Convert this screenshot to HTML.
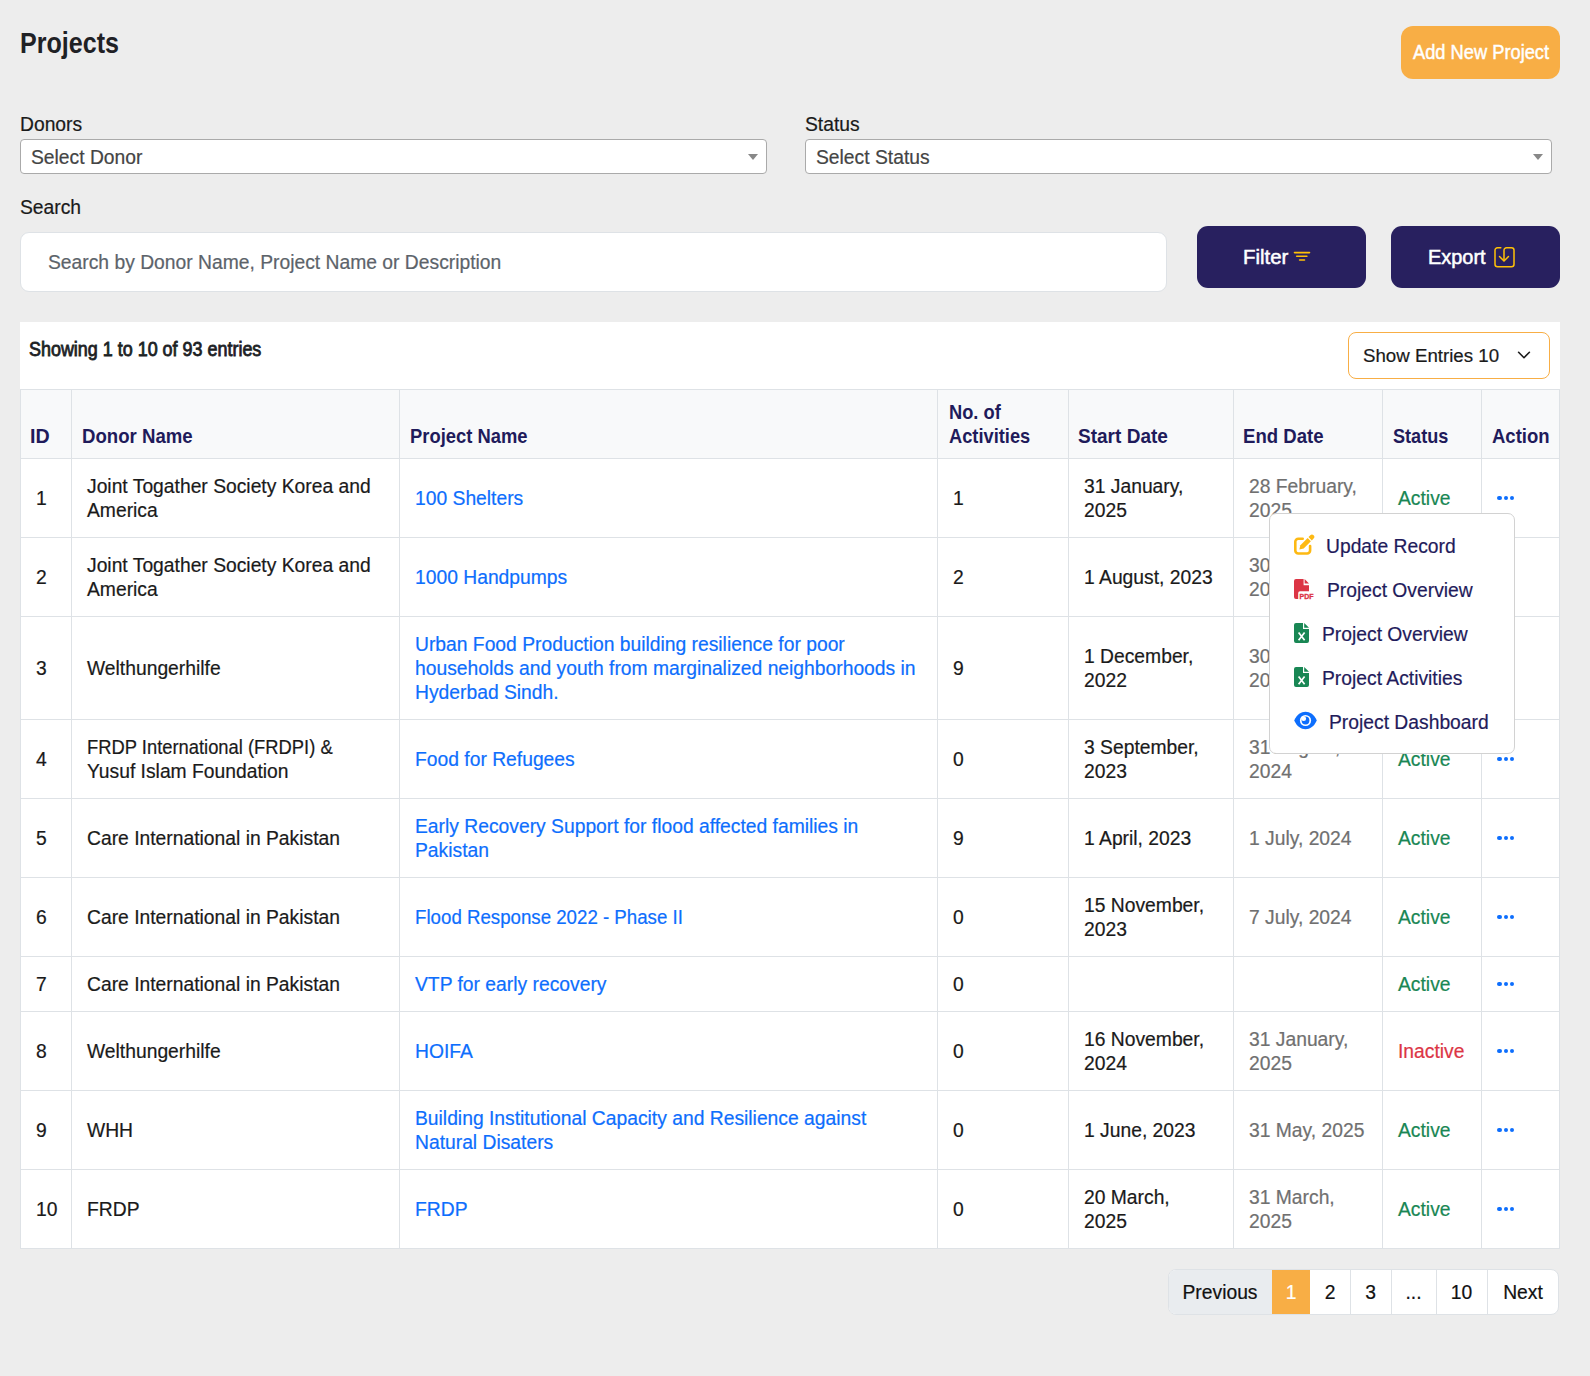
<!DOCTYPE html>
<html><head><meta charset="utf-8"><title>Projects</title>
<style>
*{margin:0;padding:0;box-sizing:border-box}
html,body{width:1590px;height:1376px;overflow:hidden;background:#ededed;font-family:"Liberation Sans", sans-serif;}
.t{position:absolute;white-space:nowrap;-webkit-text-stroke:0.2px currentColor;}
.b{position:absolute;}
</style></head><body>

<div class="t" style="left:19.61px;top:26.55px;font-size:29px;color:#1f2125;font-weight:bold;letter-spacing:0px;line-height:32px;transform-origin:0 0;transform:scaleX(0.8644);-webkit-text-stroke:0;">Projects</div>
<div class="b" style="left:1401px;top:26px;width:159px;height:53px;background:#f8ae45;border-radius:12px;"></div>
<div class="t" style="left:1412.55px;top:39.64px;font-size:19.5px;color:#fff;font-weight:normal;letter-spacing:0px;line-height:24px;transform-origin:0 0;transform:scaleX(0.9370);-webkit-text-stroke:0.45px #fff;">Add New Project</div>
<div class="t" style="left:20px;top:113.11255px;font-size:19.3px;color:#1a1a1a;font-weight:normal;letter-spacing:0px;line-height:24px;">Donors</div>
<div class="t" style="left:805px;top:113.11255px;font-size:19.3px;color:#1a1a1a;font-weight:normal;letter-spacing:0px;line-height:24px;">Status</div>
<div class="b" style="left:20px;top:139px;width:747px;height:35px;background:#fff;border:1px solid #aaa;border-radius:4px;"></div>
<div class="t" style="left:31px;top:145.71255000000002px;font-size:19.3px;color:#444;font-weight:normal;letter-spacing:0px;line-height:24px;">Select Donor</div>
<div class="b" style="left:748px;top:154px;width:0;height:0;border-left:5px solid transparent;border-right:5px solid transparent;border-top:6px solid #888;"></div>
<div class="b" style="left:805px;top:139px;width:747px;height:35px;background:#fff;border:1px solid #aaa;border-radius:4px;"></div>
<div class="t" style="left:816px;top:145.71255000000002px;font-size:19.3px;color:#444;font-weight:normal;letter-spacing:0px;line-height:24px;">Select Status</div>
<div class="b" style="left:1533px;top:154px;width:0;height:0;border-left:5px solid transparent;border-right:5px solid transparent;border-top:6px solid #888;"></div>
<div class="t" style="left:20px;top:195.81255px;font-size:19.3px;color:#1a1a1a;font-weight:normal;letter-spacing:0px;line-height:24px;">Search</div>
<div class="b" style="left:20px;top:232px;width:1147px;height:60px;background:#fff;border:1px solid #dee2e6;border-radius:9px;"></div>
<div class="t" style="left:48px;top:250.91255px;font-size:19.3px;color:#5c636a;font-weight:normal;letter-spacing:0px;line-height:24px;">Search by Donor Name, Project Name or Description</div>
<div class="b" style="left:1197px;top:226px;width:169px;height:62px;background:#28205f;border-radius:11px;"></div>
<div class="t" style="left:1242.72px;top:245.04px;font-size:19.5px;color:#fff;font-weight:normal;letter-spacing:0px;line-height:24px;transform-origin:0 0;transform:scaleX(1.0449);-webkit-text-stroke:0.5px #fff;">Filter</div>
<svg class="b" style="left:1292px;top:249px" width="20" height="14" viewBox="0 0 20 14">
<g stroke="#ffc107" stroke-width="1.6" stroke-linecap="round">
<line x1="2.5" y1="3.6" x2="17.5" y2="3.6"/><line x1="4.7" y1="7.3" x2="14.9" y2="7.3"/><line x1="7.6" y1="11" x2="12.5" y2="11"/></g></svg>
<div class="b" style="left:1391px;top:226px;width:169px;height:62px;background:#28205f;border-radius:11px;"></div>
<div class="t" style="left:1427.96px;top:245.04px;font-size:19.5px;color:#fff;font-weight:normal;letter-spacing:0px;line-height:24px;transform-origin:0 0;transform:scaleX(1.0220);-webkit-text-stroke:0.5px #fff;">Export</div>
<svg class="b" style="left:1492px;top:245px" width="24" height="24" viewBox="0 0 24 24">
<g fill="none" stroke="#ffc107" stroke-width="1.5" stroke-linecap="round" stroke-linejoin="round">
<path d="M8.8 2.7 H5.5 a2.5 2.5 0 0 0 -2.5 2.5 V19.2 a2.5 2.5 0 0 0 2.5 2.5 H19.5 a2.5 2.5 0 0 0 2.5 -2.5 V5.2 a2.5 2.5 0 0 0 -2.5 -2.5 H14.5 a2.5 2.5 0 0 0 -2.5 2.5 V15.5"/>
<path d="M7.5 11.5 L12 16 L16.5 11.5"/></g></svg>
<div class="b" style="left:20px;top:322px;width:1540px;height:926px;background:#fff;"></div>
<div class="t" style="left:29.29px;top:337.91px;font-size:19.3px;color:#1a1a1a;font-weight:normal;letter-spacing:0px;line-height:24px;transform-origin:0 0;transform:scaleX(0.9302);-webkit-text-stroke:0.8px #212529;">Showing 1 to 10 of 93 entries</div>
<div class="b" style="left:1348px;top:332px;width:202px;height:47px;background:#fff;border:1px solid #f8ae45;border-radius:8px;"></div>
<div class="t" style="left:1363px;top:344.22044999999997px;font-size:18.7px;color:#1a1a1a;font-weight:normal;letter-spacing:0px;line-height:24px;">Show Entries 10</div>
<svg class="b" style="left:1514px;top:348px" width="20" height="14" viewBox="0 0 20 14">
<path d="M4.6 4.3 L10 9.7 L15.4 4.3" fill="none" stroke="#1a1a1a" stroke-width="1.6" stroke-linecap="round" stroke-linejoin="round"/></svg>
<div class="b" style="left:20px;top:389px;width:1540px;height:69px;background:#f8f9fa;"></div>
<div class="b" style="left:20px;top:389px;width:1540px;height:1px;background:#dee2e6;"></div>
<div class="b" style="left:20px;top:458px;width:1540px;height:1px;background:#dee2e6;"></div>
<div class="b" style="left:20px;top:537px;width:1540px;height:1px;background:#dee2e6;"></div>
<div class="b" style="left:20px;top:616px;width:1540px;height:1px;background:#dee2e6;"></div>
<div class="b" style="left:20px;top:719px;width:1540px;height:1px;background:#dee2e6;"></div>
<div class="b" style="left:20px;top:798px;width:1540px;height:1px;background:#dee2e6;"></div>
<div class="b" style="left:20px;top:877px;width:1540px;height:1px;background:#dee2e6;"></div>
<div class="b" style="left:20px;top:956px;width:1540px;height:1px;background:#dee2e6;"></div>
<div class="b" style="left:20px;top:1011px;width:1540px;height:1px;background:#dee2e6;"></div>
<div class="b" style="left:20px;top:1090px;width:1540px;height:1px;background:#dee2e6;"></div>
<div class="b" style="left:20px;top:1169px;width:1540px;height:1px;background:#dee2e6;"></div>
<div class="b" style="left:20px;top:1248px;width:1540px;height:1px;background:#dee2e6;"></div>
<div class="b" style="left:20px;top:389px;width:1px;height:860px;background:#dee2e6;"></div>
<div class="b" style="left:71px;top:389px;width:1px;height:860px;background:#dee2e6;"></div>
<div class="b" style="left:399px;top:389px;width:1px;height:860px;background:#dee2e6;"></div>
<div class="b" style="left:937px;top:389px;width:1px;height:860px;background:#dee2e6;"></div>
<div class="b" style="left:1068px;top:389px;width:1px;height:860px;background:#dee2e6;"></div>
<div class="b" style="left:1233px;top:389px;width:1px;height:860px;background:#dee2e6;"></div>
<div class="b" style="left:1382px;top:389px;width:1px;height:860px;background:#dee2e6;"></div>
<div class="b" style="left:1481px;top:389px;width:1px;height:860px;background:#dee2e6;"></div>
<div class="b" style="left:1559px;top:389px;width:1px;height:860px;background:#dee2e6;"></div>
<div class="t" style="left:30.37px;top:424.0px;font-size:20.5px;color:#1f1b5b;font-weight:bold;letter-spacing:0px;line-height:24px;transform-origin:0 0;transform:scaleX(0.9592);-webkit-text-stroke:0;">ID</div>
<div class="t" style="left:81.64px;top:424.0px;font-size:20.5px;color:#1f1b5b;font-weight:bold;letter-spacing:0px;line-height:24px;transform-origin:0 0;transform:scaleX(0.9080);-webkit-text-stroke:0;">Donor Name</div>
<div class="t" style="left:409.51px;top:424.0px;font-size:20.5px;color:#1f1b5b;font-weight:bold;letter-spacing:0px;line-height:24px;transform-origin:0 0;transform:scaleX(0.8969);-webkit-text-stroke:0;">Project Name</div>
<div class="t" style="left:948.54px;top:400.0px;font-size:20.5px;color:#1f1b5b;font-weight:bold;letter-spacing:0px;line-height:24px;transform-origin:0 0;transform:scaleX(0.8910);-webkit-text-stroke:0;">No. of<br>Activities</div>
<div class="t" style="left:1077.63px;top:424.0px;font-size:20.5px;color:#1f1b5b;font-weight:bold;letter-spacing:0px;line-height:24px;transform-origin:0 0;transform:scaleX(0.9285);-webkit-text-stroke:0;">Start Date</div>
<div class="t" style="left:1242.75px;top:424.0px;font-size:20.5px;color:#1f1b5b;font-weight:bold;letter-spacing:0px;line-height:24px;transform-origin:0 0;transform:scaleX(0.9059);-webkit-text-stroke:0;">End Date</div>
<div class="t" style="left:1392.76px;top:424.0px;font-size:20.5px;color:#1f1b5b;font-weight:bold;letter-spacing:0px;line-height:24px;transform-origin:0 0;transform:scaleX(0.8841);-webkit-text-stroke:0;">Status</div>
<div class="t" style="left:1491.94px;top:424.0px;font-size:20.5px;color:#1f1b5b;font-weight:bold;letter-spacing:0px;line-height:24px;transform-origin:0 0;transform:scaleX(0.9030);-webkit-text-stroke:0;">Action</div>
<div class="t" style="left:36px;top:487.1px;font-size:19.3px;color:#1a1a1a;font-weight:normal;letter-spacing:0px;line-height:24px;">1</div>
<div class="t" style="left:87px;top:475.1px;font-size:19.3px;color:#1a1a1a;font-weight:normal;letter-spacing:0px;line-height:24px;">Joint Togather Society Korea and</div>
<div class="t" style="left:87px;top:499.1px;font-size:19.3px;color:#1a1a1a;font-weight:normal;letter-spacing:0px;line-height:24px;">America</div>
<div class="t" style="left:415px;top:487.1px;font-size:19.3px;color:#0d6efd;font-weight:normal;letter-spacing:0px;line-height:24px;">100 Shelters</div>
<div class="t" style="left:953px;top:487.1px;font-size:19.3px;color:#1a1a1a;font-weight:normal;letter-spacing:0px;line-height:24px;">1</div>
<div class="t" style="left:1084px;top:475.1px;font-size:19.3px;color:#1a1a1a;font-weight:normal;letter-spacing:0px;line-height:24px;">31 January,</div>
<div class="t" style="left:1084px;top:499.1px;font-size:19.3px;color:#1a1a1a;font-weight:normal;letter-spacing:0px;line-height:24px;">2025</div>
<div class="t" style="left:1249px;top:475.1px;font-size:19.3px;color:#707070;font-weight:normal;letter-spacing:0px;line-height:24px;">28 February,</div>
<div class="t" style="left:1249px;top:499.1px;font-size:19.3px;color:#707070;font-weight:normal;letter-spacing:0px;line-height:24px;">2025</div>
<div class="t" style="left:1398px;top:487.1px;font-size:19.3px;color:#198754;font-weight:normal;letter-spacing:0px;line-height:24px;">Active</div>
<div class="b" style="left:1497.35px;top:495.85px;width:4.3px;height:4.3px;border-radius:50%;background:#0d6efd;"></div>
<div class="b" style="left:1503.55px;top:495.85px;width:4.3px;height:4.3px;border-radius:50%;background:#0d6efd;"></div>
<div class="b" style="left:1509.75px;top:495.85px;width:4.3px;height:4.3px;border-radius:50%;background:#0d6efd;"></div>
<div class="t" style="left:36px;top:566.1px;font-size:19.3px;color:#1a1a1a;font-weight:normal;letter-spacing:0px;line-height:24px;">2</div>
<div class="t" style="left:87px;top:554.1px;font-size:19.3px;color:#1a1a1a;font-weight:normal;letter-spacing:0px;line-height:24px;">Joint Togather Society Korea and</div>
<div class="t" style="left:87px;top:578.1px;font-size:19.3px;color:#1a1a1a;font-weight:normal;letter-spacing:0px;line-height:24px;">America</div>
<div class="t" style="left:415px;top:566.1px;font-size:19.3px;color:#0d6efd;font-weight:normal;letter-spacing:0px;line-height:24px;">1000 Handpumps</div>
<div class="t" style="left:953px;top:566.1px;font-size:19.3px;color:#1a1a1a;font-weight:normal;letter-spacing:0px;line-height:24px;">2</div>
<div class="t" style="left:1084px;top:566.1px;font-size:19.3px;color:#1a1a1a;font-weight:normal;letter-spacing:0px;line-height:24px;">1 August, 2023</div>
<div class="t" style="left:1249px;top:554.1px;font-size:19.3px;color:#707070;font-weight:normal;letter-spacing:0px;line-height:24px;">30 August,</div>
<div class="t" style="left:1249px;top:578.1px;font-size:19.3px;color:#707070;font-weight:normal;letter-spacing:0px;line-height:24px;">2024</div>
<div class="t" style="left:1398px;top:566.1px;font-size:19.3px;color:#198754;font-weight:normal;letter-spacing:0px;line-height:24px;">Active</div>
<div class="b" style="left:1497.35px;top:574.85px;width:4.3px;height:4.3px;border-radius:50%;background:#0d6efd;"></div>
<div class="b" style="left:1503.55px;top:574.85px;width:4.3px;height:4.3px;border-radius:50%;background:#0d6efd;"></div>
<div class="b" style="left:1509.75px;top:574.85px;width:4.3px;height:4.3px;border-radius:50%;background:#0d6efd;"></div>
<div class="t" style="left:36px;top:657.1px;font-size:19.3px;color:#1a1a1a;font-weight:normal;letter-spacing:0px;line-height:24px;">3</div>
<div class="t" style="left:87px;top:657.1px;font-size:19.3px;color:#1a1a1a;font-weight:normal;letter-spacing:0px;line-height:24px;">Welthungerhilfe</div>
<div class="t" style="left:415px;top:633.1px;font-size:19.3px;color:#0d6efd;font-weight:normal;letter-spacing:0px;line-height:24px;">Urban Food Production building resilience for poor</div>
<div class="t" style="left:415px;top:657.1px;font-size:19.3px;color:#0d6efd;font-weight:normal;letter-spacing:0px;line-height:24px;">households and youth from marginalized neighborhoods in</div>
<div class="t" style="left:415px;top:681.1px;font-size:19.3px;color:#0d6efd;font-weight:normal;letter-spacing:0px;line-height:24px;">Hyderbad Sindh.</div>
<div class="t" style="left:953px;top:657.1px;font-size:19.3px;color:#1a1a1a;font-weight:normal;letter-spacing:0px;line-height:24px;">9</div>
<div class="t" style="left:1084px;top:645.1px;font-size:19.3px;color:#1a1a1a;font-weight:normal;letter-spacing:0px;line-height:24px;">1 December,</div>
<div class="t" style="left:1084px;top:669.1px;font-size:19.3px;color:#1a1a1a;font-weight:normal;letter-spacing:0px;line-height:24px;">2022</div>
<div class="t" style="left:1249px;top:645.1px;font-size:19.3px;color:#707070;font-weight:normal;letter-spacing:0px;line-height:24px;">30 November,</div>
<div class="t" style="left:1249px;top:669.1px;font-size:19.3px;color:#707070;font-weight:normal;letter-spacing:0px;line-height:24px;">2024</div>
<div class="t" style="left:1398px;top:657.1px;font-size:19.3px;color:#198754;font-weight:normal;letter-spacing:0px;line-height:24px;">Active</div>
<div class="b" style="left:1497.35px;top:665.85px;width:4.3px;height:4.3px;border-radius:50%;background:#0d6efd;"></div>
<div class="b" style="left:1503.55px;top:665.85px;width:4.3px;height:4.3px;border-radius:50%;background:#0d6efd;"></div>
<div class="b" style="left:1509.75px;top:665.85px;width:4.3px;height:4.3px;border-radius:50%;background:#0d6efd;"></div>
<div class="t" style="left:36px;top:748.1px;font-size:19.3px;color:#1a1a1a;font-weight:normal;letter-spacing:0px;line-height:24px;">4</div>
<div class="t" style="left:87px;top:736.1px;font-size:19.3px;color:#1a1a1a;font-weight:normal;letter-spacing:0px;line-height:24px;transform-origin:1.59px 0;transform:scaleX(0.9522);">FRDP International (FRDPI) &</div>
<div class="t" style="left:87px;top:760.1px;font-size:19.3px;color:#1a1a1a;font-weight:normal;letter-spacing:0px;line-height:24px;">Yusuf Islam Foundation</div>
<div class="t" style="left:415px;top:748.1px;font-size:19.3px;color:#0d6efd;font-weight:normal;letter-spacing:0px;line-height:24px;">Food for Refugees</div>
<div class="t" style="left:953px;top:748.1px;font-size:19.3px;color:#1a1a1a;font-weight:normal;letter-spacing:0px;line-height:24px;">0</div>
<div class="t" style="left:1084px;top:736.1px;font-size:19.3px;color:#1a1a1a;font-weight:normal;letter-spacing:0px;line-height:24px;">3 September,</div>
<div class="t" style="left:1084px;top:760.1px;font-size:19.3px;color:#1a1a1a;font-weight:normal;letter-spacing:0px;line-height:24px;">2023</div>
<div class="t" style="left:1249px;top:736.1px;font-size:19.3px;color:#707070;font-weight:normal;letter-spacing:0px;line-height:24px;">31 August,</div>
<div class="t" style="left:1249px;top:760.1px;font-size:19.3px;color:#707070;font-weight:normal;letter-spacing:0px;line-height:24px;">2024</div>
<div class="t" style="left:1398px;top:748.1px;font-size:19.3px;color:#198754;font-weight:normal;letter-spacing:0px;line-height:24px;">Active</div>
<div class="b" style="left:1497.35px;top:756.85px;width:4.3px;height:4.3px;border-radius:50%;background:#0d6efd;"></div>
<div class="b" style="left:1503.55px;top:756.85px;width:4.3px;height:4.3px;border-radius:50%;background:#0d6efd;"></div>
<div class="b" style="left:1509.75px;top:756.85px;width:4.3px;height:4.3px;border-radius:50%;background:#0d6efd;"></div>
<div class="t" style="left:36px;top:827.1px;font-size:19.3px;color:#1a1a1a;font-weight:normal;letter-spacing:0px;line-height:24px;">5</div>
<div class="t" style="left:87px;top:827.1px;font-size:19.3px;color:#1a1a1a;font-weight:normal;letter-spacing:0px;line-height:24px;">Care International in Pakistan</div>
<div class="t" style="left:415px;top:815.1px;font-size:19.3px;color:#0d6efd;font-weight:normal;letter-spacing:0px;line-height:24px;">Early Recovery Support for flood affected families in</div>
<div class="t" style="left:415px;top:839.1px;font-size:19.3px;color:#0d6efd;font-weight:normal;letter-spacing:0px;line-height:24px;">Pakistan</div>
<div class="t" style="left:953px;top:827.1px;font-size:19.3px;color:#1a1a1a;font-weight:normal;letter-spacing:0px;line-height:24px;">9</div>
<div class="t" style="left:1084px;top:827.1px;font-size:19.3px;color:#1a1a1a;font-weight:normal;letter-spacing:0px;line-height:24px;">1 April, 2023</div>
<div class="t" style="left:1249px;top:827.1px;font-size:19.3px;color:#707070;font-weight:normal;letter-spacing:0px;line-height:24px;">1 July, 2024</div>
<div class="t" style="left:1398px;top:827.1px;font-size:19.3px;color:#198754;font-weight:normal;letter-spacing:0px;line-height:24px;">Active</div>
<div class="b" style="left:1497.35px;top:835.85px;width:4.3px;height:4.3px;border-radius:50%;background:#0d6efd;"></div>
<div class="b" style="left:1503.55px;top:835.85px;width:4.3px;height:4.3px;border-radius:50%;background:#0d6efd;"></div>
<div class="b" style="left:1509.75px;top:835.85px;width:4.3px;height:4.3px;border-radius:50%;background:#0d6efd;"></div>
<div class="t" style="left:36px;top:906.1px;font-size:19.3px;color:#1a1a1a;font-weight:normal;letter-spacing:0px;line-height:24px;">6</div>
<div class="t" style="left:87px;top:906.1px;font-size:19.3px;color:#1a1a1a;font-weight:normal;letter-spacing:0px;line-height:24px;">Care International in Pakistan</div>
<div class="t" style="left:415px;top:906.1px;font-size:19.3px;color:#0d6efd;font-weight:normal;letter-spacing:0px;line-height:24px;transform-origin:1.59px 0;transform:scaleX(0.9685);">Flood Response 2022 - Phase II</div>
<div class="t" style="left:953px;top:906.1px;font-size:19.3px;color:#1a1a1a;font-weight:normal;letter-spacing:0px;line-height:24px;">0</div>
<div class="t" style="left:1084px;top:894.1px;font-size:19.3px;color:#1a1a1a;font-weight:normal;letter-spacing:0px;line-height:24px;">15 November,</div>
<div class="t" style="left:1084px;top:918.1px;font-size:19.3px;color:#1a1a1a;font-weight:normal;letter-spacing:0px;line-height:24px;">2023</div>
<div class="t" style="left:1249px;top:906.1px;font-size:19.3px;color:#707070;font-weight:normal;letter-spacing:0px;line-height:24px;">7 July, 2024</div>
<div class="t" style="left:1398px;top:906.1px;font-size:19.3px;color:#198754;font-weight:normal;letter-spacing:0px;line-height:24px;">Active</div>
<div class="b" style="left:1497.35px;top:914.85px;width:4.3px;height:4.3px;border-radius:50%;background:#0d6efd;"></div>
<div class="b" style="left:1503.55px;top:914.85px;width:4.3px;height:4.3px;border-radius:50%;background:#0d6efd;"></div>
<div class="b" style="left:1509.75px;top:914.85px;width:4.3px;height:4.3px;border-radius:50%;background:#0d6efd;"></div>
<div class="t" style="left:36px;top:973.1px;font-size:19.3px;color:#1a1a1a;font-weight:normal;letter-spacing:0px;line-height:24px;">7</div>
<div class="t" style="left:87px;top:973.1px;font-size:19.3px;color:#1a1a1a;font-weight:normal;letter-spacing:0px;line-height:24px;">Care International in Pakistan</div>
<div class="t" style="left:415px;top:973.1px;font-size:19.3px;color:#0d6efd;font-weight:normal;letter-spacing:0px;line-height:24px;">VTP for early recovery</div>
<div class="t" style="left:953px;top:973.1px;font-size:19.3px;color:#1a1a1a;font-weight:normal;letter-spacing:0px;line-height:24px;">0</div>
<div class="t" style="left:1398px;top:973.1px;font-size:19.3px;color:#198754;font-weight:normal;letter-spacing:0px;line-height:24px;">Active</div>
<div class="b" style="left:1497.35px;top:981.85px;width:4.3px;height:4.3px;border-radius:50%;background:#0d6efd;"></div>
<div class="b" style="left:1503.55px;top:981.85px;width:4.3px;height:4.3px;border-radius:50%;background:#0d6efd;"></div>
<div class="b" style="left:1509.75px;top:981.85px;width:4.3px;height:4.3px;border-radius:50%;background:#0d6efd;"></div>
<div class="t" style="left:36px;top:1040.1px;font-size:19.3px;color:#1a1a1a;font-weight:normal;letter-spacing:0px;line-height:24px;">8</div>
<div class="t" style="left:87px;top:1040.1px;font-size:19.3px;color:#1a1a1a;font-weight:normal;letter-spacing:0px;line-height:24px;">Welthungerhilfe</div>
<div class="t" style="left:415px;top:1040.1px;font-size:19.3px;color:#0d6efd;font-weight:normal;letter-spacing:0px;line-height:24px;">HOIFA</div>
<div class="t" style="left:953px;top:1040.1px;font-size:19.3px;color:#1a1a1a;font-weight:normal;letter-spacing:0px;line-height:24px;">0</div>
<div class="t" style="left:1084px;top:1028.1px;font-size:19.3px;color:#1a1a1a;font-weight:normal;letter-spacing:0px;line-height:24px;">16 November,</div>
<div class="t" style="left:1084px;top:1052.1px;font-size:19.3px;color:#1a1a1a;font-weight:normal;letter-spacing:0px;line-height:24px;">2024</div>
<div class="t" style="left:1249px;top:1028.1px;font-size:19.3px;color:#707070;font-weight:normal;letter-spacing:0px;line-height:24px;">31 January,</div>
<div class="t" style="left:1249px;top:1052.1px;font-size:19.3px;color:#707070;font-weight:normal;letter-spacing:0px;line-height:24px;">2025</div>
<div class="t" style="left:1398px;top:1040.1px;font-size:19.3px;color:#dc3545;font-weight:normal;letter-spacing:0px;line-height:24px;">Inactive</div>
<div class="b" style="left:1497.35px;top:1048.85px;width:4.3px;height:4.3px;border-radius:50%;background:#0d6efd;"></div>
<div class="b" style="left:1503.55px;top:1048.85px;width:4.3px;height:4.3px;border-radius:50%;background:#0d6efd;"></div>
<div class="b" style="left:1509.75px;top:1048.85px;width:4.3px;height:4.3px;border-radius:50%;background:#0d6efd;"></div>
<div class="t" style="left:36px;top:1119.1px;font-size:19.3px;color:#1a1a1a;font-weight:normal;letter-spacing:0px;line-height:24px;">9</div>
<div class="t" style="left:87px;top:1119.1px;font-size:19.3px;color:#1a1a1a;font-weight:normal;letter-spacing:0px;line-height:24px;">WHH</div>
<div class="t" style="left:415px;top:1107.1px;font-size:19.3px;color:#0d6efd;font-weight:normal;letter-spacing:0px;line-height:24px;">Building Institutional Capacity and Resilience against</div>
<div class="t" style="left:415px;top:1131.1px;font-size:19.3px;color:#0d6efd;font-weight:normal;letter-spacing:0px;line-height:24px;">Natural Disaters</div>
<div class="t" style="left:953px;top:1119.1px;font-size:19.3px;color:#1a1a1a;font-weight:normal;letter-spacing:0px;line-height:24px;">0</div>
<div class="t" style="left:1084px;top:1119.1px;font-size:19.3px;color:#1a1a1a;font-weight:normal;letter-spacing:0px;line-height:24px;">1 June, 2023</div>
<div class="t" style="left:1249px;top:1119.1px;font-size:19.3px;color:#707070;font-weight:normal;letter-spacing:0px;line-height:24px;">31 May, 2025</div>
<div class="t" style="left:1398px;top:1119.1px;font-size:19.3px;color:#198754;font-weight:normal;letter-spacing:0px;line-height:24px;">Active</div>
<div class="b" style="left:1497.35px;top:1127.85px;width:4.3px;height:4.3px;border-radius:50%;background:#0d6efd;"></div>
<div class="b" style="left:1503.55px;top:1127.85px;width:4.3px;height:4.3px;border-radius:50%;background:#0d6efd;"></div>
<div class="b" style="left:1509.75px;top:1127.85px;width:4.3px;height:4.3px;border-radius:50%;background:#0d6efd;"></div>
<div class="t" style="left:36px;top:1198.1px;font-size:19.3px;color:#1a1a1a;font-weight:normal;letter-spacing:0px;line-height:24px;">10</div>
<div class="t" style="left:87px;top:1198.1px;font-size:19.3px;color:#1a1a1a;font-weight:normal;letter-spacing:0px;line-height:24px;">FRDP</div>
<div class="t" style="left:415px;top:1198.1px;font-size:19.3px;color:#0d6efd;font-weight:normal;letter-spacing:0px;line-height:24px;">FRDP</div>
<div class="t" style="left:953px;top:1198.1px;font-size:19.3px;color:#1a1a1a;font-weight:normal;letter-spacing:0px;line-height:24px;">0</div>
<div class="t" style="left:1084px;top:1186.1px;font-size:19.3px;color:#1a1a1a;font-weight:normal;letter-spacing:0px;line-height:24px;">20 March,</div>
<div class="t" style="left:1084px;top:1210.1px;font-size:19.3px;color:#1a1a1a;font-weight:normal;letter-spacing:0px;line-height:24px;">2025</div>
<div class="t" style="left:1249px;top:1186.1px;font-size:19.3px;color:#707070;font-weight:normal;letter-spacing:0px;line-height:24px;">31 March,</div>
<div class="t" style="left:1249px;top:1210.1px;font-size:19.3px;color:#707070;font-weight:normal;letter-spacing:0px;line-height:24px;">2025</div>
<div class="t" style="left:1398px;top:1198.1px;font-size:19.3px;color:#198754;font-weight:normal;letter-spacing:0px;line-height:24px;">Active</div>
<div class="b" style="left:1497.35px;top:1206.85px;width:4.3px;height:4.3px;border-radius:50%;background:#0d6efd;"></div>
<div class="b" style="left:1503.55px;top:1206.85px;width:4.3px;height:4.3px;border-radius:50%;background:#0d6efd;"></div>
<div class="b" style="left:1509.75px;top:1206.85px;width:4.3px;height:4.3px;border-radius:50%;background:#0d6efd;"></div>
<div class="b" style="left:1168px;top:1269px;width:391px;height:46px;background:#fff;border:1px solid #dee2e6;border-radius:8px;overflow:hidden;"><div class="b" style="left:0;top:0;width:103px;height:44px;background:#e9ecef;"></div><div class="b" style="left:103px;top:-1px;width:38px;height:46px;background:#f8ae45;"></div><div class="b" style="left:181px;top:0;width:1px;height:44px;background:#dee2e6;"></div><div class="b" style="left:222px;top:0;width:1px;height:44px;background:#dee2e6;"></div><div class="b" style="left:267px;top:0;width:1px;height:44px;background:#dee2e6;"></div><div class="b" style="left:318px;top:0;width:1px;height:44px;background:#dee2e6;"></div></div>
<div class="t" style="left:1168px;top:1281.0125500000001px;width:104px;text-align:center;font-size:19.3px;line-height:24px;color:#111;">Previous</div>
<div class="t" style="left:1272px;top:1281.0125500000001px;width:38px;text-align:center;font-size:19.3px;line-height:24px;color:#fff;">1</div>
<div class="t" style="left:1310px;top:1281.0125500000001px;width:40px;text-align:center;font-size:19.3px;line-height:24px;color:#111;">2</div>
<div class="t" style="left:1350px;top:1281.0125500000001px;width:41px;text-align:center;font-size:19.3px;line-height:24px;color:#111;">3</div>
<div class="t" style="left:1391px;top:1281.0125500000001px;width:45px;text-align:center;font-size:19.3px;line-height:24px;color:#111;">...</div>
<div class="t" style="left:1436px;top:1281.0125500000001px;width:51px;text-align:center;font-size:19.3px;line-height:24px;color:#111;">10</div>
<div class="t" style="left:1487px;top:1281.0125500000001px;width:72px;text-align:center;font-size:19.3px;line-height:24px;color:#111;">Next</div>
<div class="b" style="left:1269px;top:513px;width:246px;height:241px;background:#fff;border:1px solid #d2d2d2;border-radius:7px;"></div>
<svg class="b" style="left:1293px;top:534px" width="22" height="22" viewBox="0 0 22 22">
<path d="M9.7 4.7 H5.3 a3 3 0 0 0 -3 3 V16.5 a3 3 0 0 0 3 3 H14.1 a3 3 0 0 0 3 -3 V12.1" fill="none" stroke="#fdb913" stroke-width="2.6" stroke-linecap="round"/>
<path d="M6.3 15.5 L7.4 11.2 L14.6 4.0 L17.9 7.3 L10.7 14.5 Z" fill="#fdb913"/>
<path d="M15.5 3.1 L17.3 1.3 a2.3 2.3 0 0 1 3.3 3.3 L18.8 6.4 Z" fill="#fdb913"/>
</svg>
<svg class="b" style="left:1293px;top:578px" width="22" height="22" viewBox="0 0 22 22">
<path d="M3 1 H10.6 V7.2 H16 V13.2 H7 a1.8 1.8 0 0 0 -1.8 1.8 V21 H3 a2 2 0 0 1 -2 -2 V3 a2 2 0 0 1 2 -2 Z" fill="#dc3545"/>
<path d="M11.6 1 L16 5.6 H11.6 Z" fill="#dc3545"/>
<text x="6.6" y="21" font-family="Liberation Sans" font-weight="bold" font-size="7.4" fill="#dc3545" stroke="#dc3545" stroke-width="0.35" textLength="14" lengthAdjust="spacingAndGlyphs">PDF</text>
</svg>
<svg class="b" style="left:1293px;top:622px" width="18" height="22" viewBox="0 0 18 22">
<path d="M3 1 H10 V7 H16 V19 a2 2 0 0 1 -2 2 H3 a2 2 0 0 1 -2 -2 V3 a2 2 0 0 1 2 -2 Z" fill="#198754"/>
<path d="M11.2 1 L16 5.8 H11.2 Z" fill="#198754"/>
<path d="M5.6 10.5 L11.6 18.2 M11.6 10.5 L5.6 18.2" stroke="#fff" stroke-width="1.7"/>
</svg>
<svg class="b" style="left:1293px;top:666px" width="18" height="22" viewBox="0 0 18 22">
<path d="M3 1 H10 V7 H16 V19 a2 2 0 0 1 -2 2 H3 a2 2 0 0 1 -2 -2 V3 a2 2 0 0 1 2 -2 Z" fill="#198754"/>
<path d="M11.2 1 L16 5.8 H11.2 Z" fill="#198754"/>
<path d="M5.6 10.5 L11.6 18.2 M11.6 10.5 L5.6 18.2" stroke="#fff" stroke-width="1.7"/>
</svg>
<svg class="b" style="left:1293px;top:710px" width="25" height="21" viewBox="0 0 25 21">
<path d="M1.2 10.5 C4 4.5 8 1.8 12.5 1.8 C17 1.8 21 4.5 23.8 10.5 C21 16.5 17 19.2 12.5 19.2 C8 19.2 4 16.5 1.2 10.5 Z" fill="#0d6efd"/>
<circle cx="12.5" cy="10.5" r="5.6" fill="#fff"/>
<circle cx="12.5" cy="10.5" r="3.9" fill="#0d6efd"/>
<circle cx="10.7" cy="8.7" r="2.4" fill="#fff"/>
</svg>
<div class="t" style="left:1326px;top:535.0125499999999px;font-size:19.3px;color:#1f1b5b;font-weight:normal;letter-spacing:0px;line-height:24px;">Update Record</div>
<div class="t" style="left:1327px;top:578.81255px;font-size:19.3px;color:#1f1b5b;font-weight:normal;letter-spacing:0px;line-height:24px;">Project Overview</div>
<div class="t" style="left:1322px;top:622.9125499999999px;font-size:19.3px;color:#1f1b5b;font-weight:normal;letter-spacing:0px;line-height:24px;">Project Overview</div>
<div class="t" style="left:1322px;top:666.9125499999999px;font-size:19.3px;color:#1f1b5b;font-weight:normal;letter-spacing:0px;line-height:24px;">Project Activities</div>
<div class="t" style="left:1329px;top:710.71255px;font-size:19.3px;color:#1f1b5b;font-weight:normal;letter-spacing:0px;line-height:24px;">Project Dashboard</div>
</body></html>
